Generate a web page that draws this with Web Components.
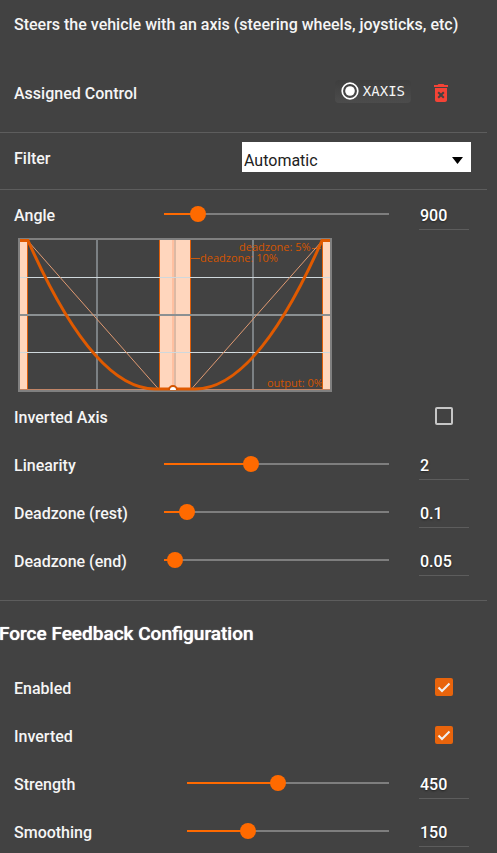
<!DOCTYPE html>
<html lang="en">
<head>
<meta charset="utf-8">
<title>Steering axis binding</title>
<style>
html, body { margin: 0; background: #424242; }
body { font-family: Roboto, "Liberation Sans", sans-serif; font-size: 16px; color: #f5f5f5; }
</style>
</head>
<body>
<binding-panel>
  <panel-intro>Steers the vehicle with an axis (steering wheels, joysticks, etc)</panel-intro>
  <control-row label="Assigned Control"></control-row>
  <panel-divider></panel-divider>
  <filter-row label="Filter"></filter-row>
  <panel-divider></panel-divider>
  <slider-row label="Angle" min="90" max="5400" step="1" value="900"></slider-row>
  <response-chart></response-chart>
  <check-row label="Inverted Axis"></check-row>
  <slider-row label="Linearity" min="0.1" max="5" step="0.1" value="2"></slider-row>
  <slider-row label="Deadzone (rest)" min="0" max="1" step="0.01" value="0.1"></slider-row>
  <slider-row label="Deadzone (end)" min="0" max="1" step="0.01" value="0.05"></slider-row>
  <panel-divider spaced></panel-divider>
  <section-title>Force Feedback Configuration</section-title>
  <check-row label="Enabled" checked></check-row>
  <check-row label="Inverted" checked></check-row>
  <slider-row wide label="Strength" min="0" max="1000" step="1" value="450"></slider-row>
  <slider-row wide label="Smoothing" min="0" max="500" step="1" value="150"></slider-row>
</binding-panel>
<script>
const mount = (el, css, html) => {
  el.attachShadow({ mode: 'open' }).innerHTML = `<style>:host,*{box-sizing:border-box}${css}</style>${html}`;
  return el.shadowRoot;
};
const rowCss = `
  :host { display: flex; align-items: center; height: 48px; padding: 0 18px 0 14px; }
  label, .label { font-weight: 500; line-height: 20px; padding-top: 4px; white-space: nowrap; }
`;

customElements.define('binding-panel', class extends HTMLElement {
  constructor() {
    super();
    mount(this, `
      :host { display: block; height: 100vh; overflow: auto; scrollbar-width: none; }
      main { margin-right: 10px; }`, `<main><slot></slot></main>`);
  }
});

customElements.define('panel-intro', class extends HTMLElement {
  constructor() {
    super();
    mount(this, `
      :host { display: block; padding: 15px 14px 19px; font-weight: 500; line-height: 20px; }
      p { margin: 0; white-space: nowrap; }`, `<p><slot></slot></p>`);
  }
});

customElements.define('panel-divider', class extends HTMLElement {
  constructor() {
    super();
    mount(this, `
      :host { display: block; }
      :host([spaced]) { margin-top: 16px; }
      hr { margin: 0; border: 0; height: 1px; background: #5d5d5d; }`, `<hr>`);
  }
});

customElements.define('section-title', class extends HTMLElement {
  constructor() {
    super();
    mount(this, `
      :host { display: block; padding: 21px 0 17px; margin-left: -1px; }
      h2 { margin: 0; font-size: 19px; font-weight: 500; line-height: 24px; color: #fff; text-shadow: 0 0 1px #fff; }`, `<h2><slot></slot></h2>`);
  }
});

customElements.define('control-row', class extends HTMLElement {
  constructor() {
    super();
    mount(this, `${rowCss}
      :host { height: 78px; padding-right: 34px; }
      .label { flex: 1; padding-top: 2px; }
      button { border: 0; margin: 0; padding: 0; background: none; color: inherit; cursor: pointer; }
      .key { display: flex; align-items: center; gap: 4px; height: 23px; margin-top: -4px; padding: 0 6px; border-radius: 4px;
        background: linear-gradient(#3e3e3e, #4c4c4c); font: 14px "DejaVu Sans Mono", monospace; }
      .remove { width: 24px; height: 24px; margin-left: 18px; color: #f44336; }
      svg { display: block; }`, `
      <span class="label">${this.getAttribute('label')}</span>
      <button class="key" type="button">
        <svg width="18" height="18" viewBox="0 0 18 18" fill="none" aria-hidden="true"><circle cx="9" cy="9" r="7.800" stroke="#fff" stroke-width="1.700"/><circle cx="9" cy="9" r="4.800" fill="#fff"/></svg>
        <span>XAXIS</span>
      </button>
      <button class="remove" type="button" aria-label="Remove control">
        <svg width="24" height="24" viewBox="0 0 24 24" fill="currentColor" aria-hidden="true"><path fill-rule="evenodd" d="M6 19c0 1.100.9 2 2 2h8c1.100 0 2-.9 2-2V7H6v12zm2.460-7.120l1.410-1.410L12 12.590l2.120-2.120 1.410 1.410L13.410 14l2.120 2.120-1.410 1.410L12 15.410l-2.120 2.120-1.410-1.410L10.590 14l-2.130-2.120zM15.500 4l-1-1h-5l-1 1H5v2h14V4z"/></svg>
      </button>`);
  }
});

customElements.define('filter-row', class extends HTMLElement {
  constructor() {
    super();
    mount(this, `${rowCss}
      :host { height: 56px; padding-right: 16px; padding-bottom: 8px; }
      label { flex: 1; }
      .box { display: grid; align-items: center; width: 52%; max-width: 229px; }
      select, svg { grid-area: 1 / 1; }
      select { appearance: none; width: 100%; height: 30px; padding: 7px 24px 0 2px; margin: 0; border: 0; border-radius: 0;
        background: #fff; color: #212121; font: 16px Roboto, "Liberation Sans", sans-serif; }
      svg { justify-self: end; margin: 6px 8px 0 0; pointer-events: none; }`, `
      <label for="f">${this.getAttribute('label')}</label>
      <div class="box"><select id="f"><option>Automatic</option></select>
      <svg width="11" height="7" viewBox="0 0 11 7" aria-hidden="true"><path d="M0 0h11L5.500 7z"/></svg></div>`);
  }
});

customElements.define('check-row', class extends HTMLElement {
  constructor() {
    super();
    mount(this, `${rowCss}
      :host { padding-right: 34px; }
      label { flex: 1; }
      .box { display: grid; }
      input, svg { grid-area: 1 / 1; }
      input { appearance: none; width: 18px; height: 18px; margin: 0; border: 2px solid #c6c6c6; border-radius: 2px; }
      input:checked { border-color: #e8640c; background: #e8640c; }
      svg { visibility: hidden; pointer-events: none; }
      input:checked + svg { visibility: visible; }`, `
      <label for="c">${this.getAttribute('label')}</label>
      <span class="box"><input id="c" type="checkbox"${this.hasAttribute('checked') ? ' checked' : ''}>
      <svg width="18" height="18" viewBox="0 0 18 18" fill="none" stroke="#f0f0f0" stroke-width="2" aria-hidden="true"><path d="M3.500 9.500l3.500 3.500 7.500-7.500"/></svg></span>`);
  }
});

customElements.define('slider-row', class extends HTMLElement {
  constructor() {
    super();
    const a = n => this.getAttribute(n);
    const root = mount(this, `${rowCss}
      :host { gap: 30px; --label: 120px; }
      :host([wide]) { --label: 143px; }
      label { flex: 0 0 var(--label); }
      .track { flex: 1; min-width: 0; display: grid; align-items: center; }
      .track::before { content: ""; grid-area: 1 / 1; height: 2px;
        background: linear-gradient(to right, #ff6a00 var(--fill), #7e7e7e var(--fill)); }
      input[type=range] { grid-area: 1 / 1; appearance: none; height: 16px; margin: 0 -8px; background: none; }
      input[type=range]::-webkit-slider-thumb { appearance: none; width: 16px; height: 16px; border-radius: 50%; background: #ff6a00; }
      input[type=text] { width: 50px; height: 32px; padding: 4px 1px 0; margin: 0; border: 0; border-bottom: 1px solid #5d5d5d; border-radius: 0;
        background: none; color: #fff; font: 500 16px Roboto, "Liberation Sans", sans-serif; text-shadow: 0 1px 2px #222; }`, `
      <label for="r">${a('label')}</label>
      <span class="track"><input id="r" type="range" min="${a('min')}" max="${a('max')}" step="${a('step')}" value="${a('value')}"></span>
      <input type="text" value="${a('value')}" aria-label="${a('label')} value">`);
    const range = root.querySelector('#r'), text = root.querySelector('[type=text]');
    const fill = () => root.querySelector('.track').style.setProperty('--fill', `${(range.value - range.min) / (range.max - range.min) * 100}%`);
    range.addEventListener('input', () => { text.value = range.value; fill(); });
    text.addEventListener('change', () => { range.value = text.value; fill(); });
    fill();
  }
});

customElements.define('response-chart', class extends HTMLElement {
  constructor() {
    super();
    mount(this, `
      :host { display: block; padding-left: 18px; }
      svg { display: block; overflow: hidden; }
      text { font: 11px "Open Sans", "Noto Sans", sans-serif; fill: #d45500; }`, `
      <svg width="314" height="154" viewBox="0 0 314 154" role="img" aria-label="Axis response curve">
        <g fill="#ffd6bd"><path d="M2 2h8v150H2zM142 2h30v150h-30zM304 2h8v150h-8z"/></g>
        <g fill="#de5e0a"><path d="M9 2h1v150H9zM141 2h1v150h-1zM172 2h1v150h-1zM304 2h1v150h-1z"/></g>
        <path d="M154 2h2v150h-2z" fill="#ffc0a0"/><path d="M156 2h2v150h-2z" fill="#dcb9a4"/>
        <path d="M79 2v150M235 2v150" stroke="#7c8184" stroke-width="2"/>
        <path d="M2 77h310" stroke="#8b9092" stroke-width="2"/>
        <path d="M2 39.500h310M2 114.500h310" stroke="#cfd8dc"/>
        <path d="M1 1h312v152H1z" fill="none" stroke="#808080" stroke-width="2"/>
        <text x="221" y="13">deadzone: 5%</text>
        <text x="182" y="24">deadzone: 10%</text>
        <text x="249" y="149">output: 0%</text>
        <path d="M173 20.500h9M294 10.500h9" stroke="#c65a12"/>
        <path d="M10 3L141 151.500M173 151.500L304 3" stroke="#e09a72" stroke-width="1" fill="none"/>
        <path d="M2 151.500h310" stroke="#c08466"/>
        <path d="M2 2.500h8Q75.500 151 137 151h40Q238.500 151 304 2.500h8" stroke="#e05a00" stroke-width="3" fill="none"/>
        <path d="M151 152a4 4 0 0 1 8 0z" fill="#fff"/>
        <path d="M151 152a4 4 0 0 1 8 0" fill="none" stroke="#d45500" stroke-width="2"/>
      </svg>`);
  }
});
</script>
</body>
</html>
